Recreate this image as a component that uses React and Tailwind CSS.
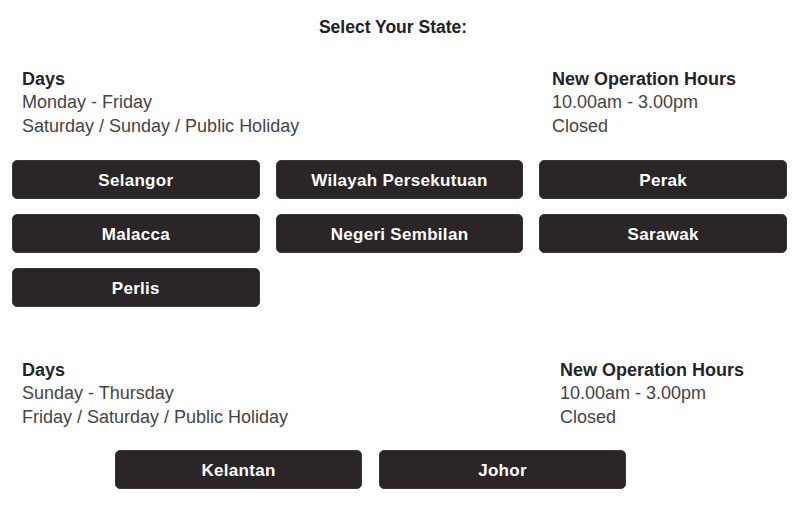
import React from "react";

const font = { fontFamily: '"Liberation Sans", Arial, sans-serif' };

function StateButton({ label }) {
  return (
    <div className="h-[39px] pt-[2px] rounded-[5px] bg-[#2a2627] border border-[#3b3738] flex items-center justify-center text-white font-bold text-[17px] tracking-[0.3px] leading-none">
      {label}
    </div>
  );
}

function Info({ rightClass, days, hours }) {
  return (
    <div className="flex text-[18px] leading-[23.5px]">
      <div className={`pl-[22px] ${rightClass}`}>
        <div className="font-bold text-[#26242b]">Days</div>
        {days.map((d) => (
          <div key={d} className="text-[#444]">{d}</div>
        ))}
      </div>
      <div>
        <div className="font-bold text-[#26242b]">New Operation Hours</div>
        {hours.map((h) => (
          <div key={h} className="text-[#444]">{h}</div>
        ))}
      </div>
    </div>
  );
}

export default function App() {
  return (
    <div className="w-[800px] h-[509px] bg-white overflow-hidden" style={font}>
      <div className="pt-[16.5px] pr-[14px] text-center font-bold text-[17.5px] leading-[20px] text-[#222]">
        Select Your State:
      </div>

      <div className="mt-[31px]">
        <Info
          rightClass="w-[552px]"
          days={["Monday - Friday", "Saturday / Sunday / Public Holiday"]}
          hours={["10.00am - 3.00pm", "Closed"]}
        />
      </div>

      <div className="mt-[21.5px] ml-[12px] w-[775px] grid grid-cols-3 gap-x-[16px] gap-y-[15px]">
        <StateButton label="Selangor" />
        <StateButton label="Wilayah Persekutuan" />
        <StateButton label="Perak" />
        <StateButton label="Malacca" />
        <StateButton label="Negeri Sembilan" />
        <StateButton label="Sarawak" />
        <StateButton label="Perlis" />
      </div>

      <div className="mt-[52px]">
        <Info
          rightClass="w-[560px]"
          days={["Sunday - Thursday", "Friday / Saturday / Public Holiday"]}
          hours={["10.00am - 3.00pm", "Closed"]}
        />
      </div>

      <div className="mt-[21px] ml-[115px] w-[511px] grid grid-cols-2 gap-x-[17px]">
        <StateButton label="Kelantan" />
        <StateButton label="Johor" />
      </div>
    </div>
  );
}
